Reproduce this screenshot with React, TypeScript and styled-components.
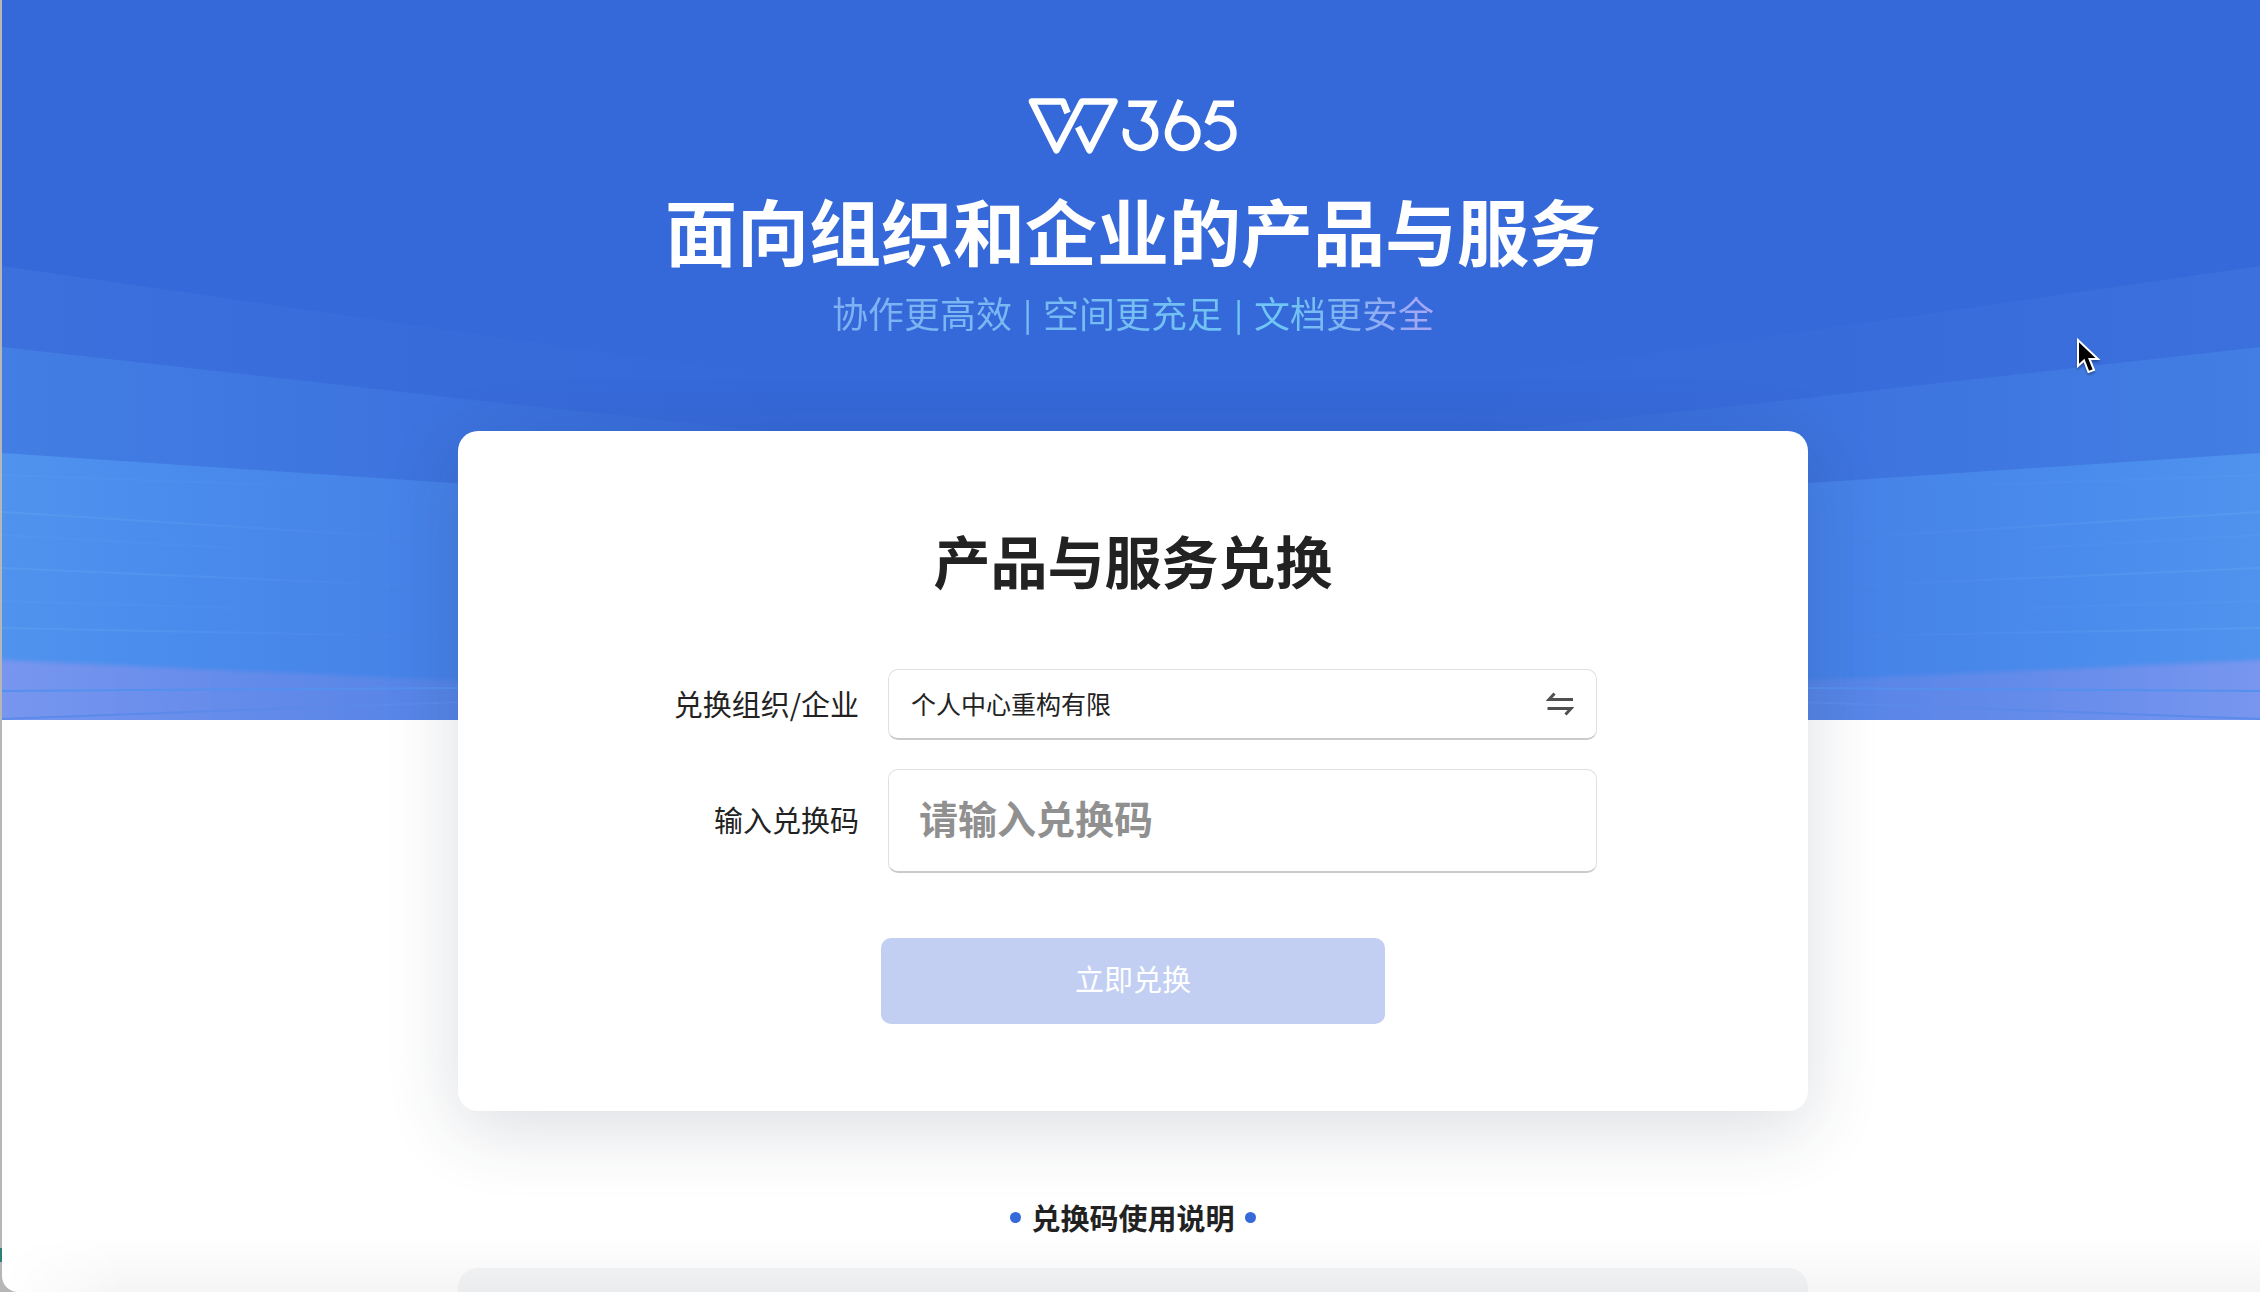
import React from 'react';
import styled, { createGlobalStyle } from 'styled-components';

const GlobalStyle = createGlobalStyle`
  * { box-sizing: border-box; }
  body {
    margin: 0;
    background: linear-gradient(#2e7f76, #2e7f76) 0 1248px / 2px 14px no-repeat, #b6b6b6;
    color: #222;
    font-family: "Noto Sans CJK SC", "Noto Sans", sans-serif;
  }
`;

const Frame = styled.div`
  position: relative;
  height: 100vh;
  margin-left: 2px;
  overflow: hidden;
  background: #fff;
  border-bottom-left-radius: 16px;
`;

const Backdrop = styled.svg`
  position: absolute;
  inset: 0;
  width: 100%;
  height: 720px;
  display: block;
`;

const Page = styled.div`
  position: relative;
  display: flex;
  flex-direction: column;
  align-items: center;
  padding: 98px 0 0 4px;
`;

const Logo = styled.svg`
  width: 210px;
  height: 58px;
  display: block;
`;

const HeroTitle = styled.h1`
  margin: 21px 0 0;
  font-size: 72px;
  line-height: 104px;
  font-weight: 700;
  color: #fff;
`;

const Slogan = styled.p`
  margin: 4px 0 0;
  font-size: 36px;
  line-height: 54px;
  font-weight: 400;
  color: transparent;
  background: linear-gradient(90deg, #7fb0f3 0%, #6fc6f4 75%, #7fb3f2 85%, #a9a6f6 100%);
  background-clip: text;
  -webkit-background-clip: text;
`;

const Divider = styled.span`
  display: inline-block;
  width: 31px;
  font-size: 31px;
  line-height: 36px;
  font-weight: 500;
  vertical-align: 2px;
  text-align: center;
`;

const Card = styled.main`
  display: flex;
  flex-direction: column;
  align-items: center;
  width: 100%;
  max-width: 1350px;
  margin-top: 92px;
  padding: 85px 0 87px;
  border-radius: 20px;
  background: #fff;
  box-shadow: 0 18px 72px rgba(38, 50, 77, 0.16);
`;

const CardTitle = styled.h2`
  margin: 0;
  font-size: 57px;
  line-height: 86px;
  font-weight: 700;
`;

const Form = styled.form`
  display: flex;
  flex-direction: column;
  align-items: center;
  width: 100%;
  margin-top: 67px;
`;

const Fields = styled.div`
  display: grid;
  grid-template-columns: 401px 709px;
  column-gap: 29px;
  row-gap: 29px;
  align-items: center;
  width: 100%;
`;

const Label = styled.label`
  padding-bottom: 4px;
  font-size: 29px;
  line-height: 44px;
  text-align: right;
`;

const FieldBox = styled.div<{ $tall?: boolean }>`
  display: flex;
  align-items: center;
  height: ${(p) => (p.$tall ? 104 : 71)}px;
  padding: ${(p) => (p.$tall ? '0 30px' : '0 22px')};
  border: 1px solid #e0e0e0;
  border-bottom: 2px solid #cacaca;
  border-radius: 10px;
`;

const TextInput = styled.input<{ $large?: boolean }>`
  flex: 1;
  min-width: 0;
  height: 100%;
  padding: 0 0 ${(p) => (p.$large ? 8 : 2)}px;
  border: 0;
  outline: 0;
  background: none;
  color: #222;
  font-family: inherit;
  font-size: ${(p) => (p.$large ? 39 : 25)}px;
  font-weight: ${(p) => (p.$large ? 700 : 400)};
  &::placeholder {
    color: #909090;
    opacity: 1;
  }
`;

const SwapButton = styled.button`
  display: flex;
  padding: 0;
  border: 0;
  background: none;
`;

const Submit = styled.button`
  width: 504px;
  height: 86px;
  margin-top: 65px;
  padding: 0 0 6px;
  border: 0;
  border-radius: 10px;
  background: #c2cff3;
  color: #fff;
  font-family: inherit;
  font-size: 29px;
  font-weight: 400;
`;

const NotesHeading = styled.h3`
  display: flex;
  align-items: center;
  gap: 10px;
  margin: 84px 0 0;
  font-size: 29px;
  line-height: 44px;
  font-weight: 700;
  &::before,
  &::after {
    content: "";
    width: 11px;
    height: 11px;
    border-radius: 50%;
    background: #3669d9;
  }
`;

const NotesPanel = styled.section`
  width: 100%;
  max-width: 1350px;
  height: 200px;
  margin-top: 29px;
  border-radius: 20px;
  background: #f5f6f8;
`;

const BottomShade = styled.div`
  position: absolute;
  inset: auto 0 0 0;
  height: 56px;
  background: linear-gradient(rgba(0, 0, 0, 0), rgba(0, 0, 0, 0.04));
  mask-image: linear-gradient(90deg, transparent, #000 120px);
  pointer-events: none;
`;

const Pointer = styled.svg`
  position: absolute;
  left: calc(100% - 185px);
  top: 335px;
  width: 30px;
  height: 44px;
  filter: drop-shadow(0 2px 1px rgba(0, 0, 0, 0.3));
`;

function Rays() {
  return (
    <g>
      <path d="M0 266 L480 335 L1130 425 V720 H0Z" fill="url(#ray1)" />
      <path d="M0 347 L480 401 L1130 470 V720 H0Z" fill="url(#ray2)" />
      <path d="M0 453 L480 485 L1130 530 V720 H0Z" fill="url(#ray3)" />
      <path d="M0 660 L480 682 V740 H0Z" fill="url(#ray4)" filter="url(#soft)" />
      <g fill="none" stroke="url(#line)" strokeWidth="2">
        <path d="M0 475 L330 487" opacity="0.3" />
        <path d="M0 512 L460 541" opacity="0.8" />
        <path d="M0 535 L230 548" opacity="0.3" />
        <path d="M0 568 L460 588" opacity="0.8" />
        <path d="M0 601 L230 608" opacity="0.3" />
        <path d="M0 628 L460 637" opacity="0.8" />
      </g>
      <path d="M0 691 L460 688" stroke="#5590ef" strokeWidth="2" />
      <path d="M0 719 L460 702" stroke="#5b8aea" strokeWidth="2" />
    </g>
  );
}

function HeroBackdrop() {
  return (
    <Backdrop viewBox="0 0 2258 720" preserveAspectRatio="none" aria-hidden="true">
      <defs>
        <linearGradient id="ray1" gradientUnits="userSpaceOnUse" x1="0" y1="0" x2="800" y2="0">
          <stop offset="0" stopColor="#3b70dd" />
          <stop offset="0.6" stopColor="#386bda" />
          <stop offset="1" stopColor="#3568d8" />
        </linearGradient>
        <linearGradient id="ray2" gradientUnits="userSpaceOnUse" x1="0" y1="0" x2="860" y2="0">
          <stop offset="0" stopColor="#427ee4" />
          <stop offset="0.5" stopColor="#3d73de" />
          <stop offset="1" stopColor="#3568d8" />
        </linearGradient>
        <linearGradient id="ray3" gradientUnits="userSpaceOnUse" x1="0" y1="0" x2="480" y2="0">
          <stop offset="0" stopColor="#4f93ee" />
          <stop offset="0.4" stopColor="#498bec" />
          <stop offset="1" stopColor="#4580e7" />
        </linearGradient>
        <linearGradient id="ray4" gradientUnits="userSpaceOnUse" x1="0" y1="0" x2="480" y2="0">
          <stop offset="0" stopColor="#7896ef" />
          <stop offset="0.5" stopColor="#648bea" />
          <stop offset="1" stopColor="#5383e6" />
        </linearGradient>
        <linearGradient id="line" gradientUnits="userSpaceOnUse" x1="0" y1="0" x2="460" y2="0">
          <stop offset="0" stopColor="#5a9cf0" />
          <stop offset="0.5" stopColor="#5090ee" />
          <stop offset="1" stopColor="#4a83e8" stopOpacity="0" />
        </linearGradient>
        <filter id="soft" filterUnits="userSpaceOnUse" x="-20" y="600" width="540" height="160">
          <feGaussianBlur stdDeviation="0 2" />
        </filter>
      </defs>
      <rect width="2258" height="720" fill="#3568d8" />
      <Rays />
      <g transform="translate(2258 0) scale(-1 1)">
        <Rays />
      </g>
    </Backdrop>
  );
}

function BrandLogo() {
  return (
    <Logo viewBox="0 0 210 58" role="img" aria-label="W365">
      <g fill="none" stroke="#fff">
        <path
          d="M39.500 15 L35 3.500 H4 L28.500 52.300 L54 3.500 H86.500 L61.500 52.300 L50 29"
          strokeWidth="6.600"
          strokeLinejoin="round"
        />
        <g strokeWidth="6.400">
          <path d="M100.300 5.700 H124.500 L117 21 A14.800 14.800 0 1 1 98.300 31" />
          <path d="M152.500 2.300 L141 29" />
          <circle cx="154.700" cy="35.300" r="14.800" />
          <path d="M206 5.700 H187.500 L179.500 25.500 A14.800 14.800 0 1 1 178.500 43.500" />
        </g>
      </g>
    </Logo>
  );
}

export default function App() {
  return (
    <>
      <GlobalStyle />
      <Frame>
        <HeroBackdrop />
        <Page>
          <BrandLogo />
          <HeroTitle>面向组织和企业的产品与服务</HeroTitle>
          <Slogan>
            协作更高效<Divider>|</Divider>空间更充足<Divider>|</Divider>文档更安全
          </Slogan>
          <Card>
            <CardTitle>产品与服务兑换</CardTitle>
            <Form onSubmit={(e) => e.preventDefault()}>
              <Fields>
                <Label htmlFor="org">兑换组织/企业</Label>
                <FieldBox>
                  <TextInput id="org" type="text" readOnly value="个人中心重构有限" />
                  <SwapButton type="button" aria-label="切换">
                    <svg width="28" height="26" viewBox="0 0 28 26" fill="none" stroke="#505050" strokeWidth="3">
                      <path d="M27 8.500 H3 L8.500 2.500" />
                      <path d="M1.500 17.500 H25 L19.500 23.500" />
                    </svg>
                  </SwapButton>
                </FieldBox>
                <Label htmlFor="code">输入兑换码</Label>
                <FieldBox $tall>
                  <TextInput id="code" type="text" $large placeholder="请输入兑换码" />
                </FieldBox>
              </Fields>
              <Submit type="submit">立即兑换</Submit>
            </Form>
          </Card>
          <NotesHeading>兑换码使用说明</NotesHeading>
          <NotesPanel />
        </Page>
        <BottomShade />
        <Pointer viewBox="0 0 30 44" aria-hidden="true">
          <path d="M3 5 V31 L9 25.500 L13.500 37 L19 35 L14.500 24 H23Z" fill="#000" stroke="#fff" strokeWidth="2" />
        </Pointer>
      </Frame>
    </>
  );
}
